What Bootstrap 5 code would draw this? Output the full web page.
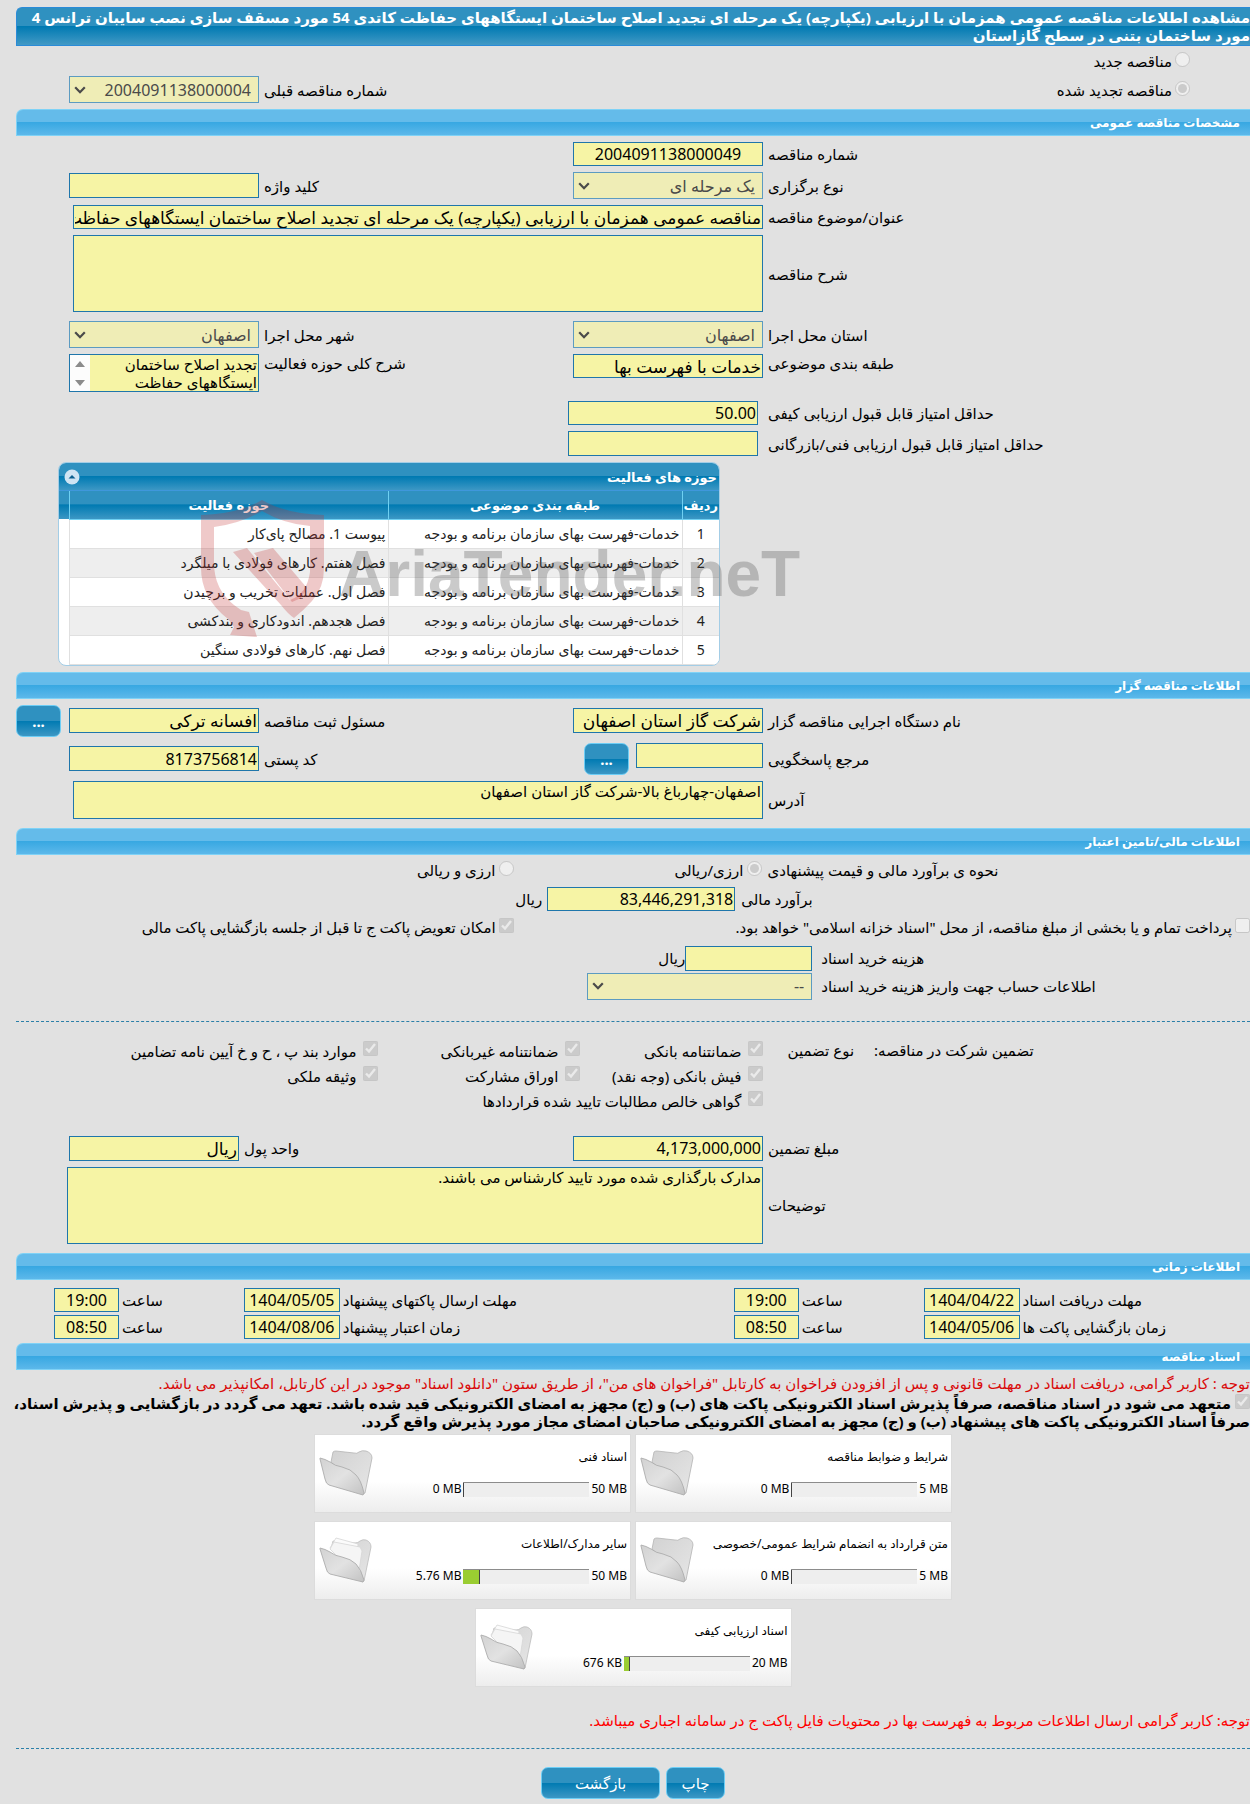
<!DOCTYPE html>
<html lang="fa" dir="rtl">
<head>
<meta charset="utf-8">
<meta name="viewport" content="width=device-width, initial-scale=1">
<title>مشاهده اطلاعات مناقصه عمومی</title>
<link rel="stylesheet" href="https://cdn.jsdelivr.net/npm/bootstrap@5.3.0/dist/css/bootstrap.min.css">
<style>
  body { background: #e1e1e1; color: #000; font: 15px/18px "Noto Sans", "DejaVu Sans", sans-serif; overflow-x: hidden; }
  .stack { display: flex; flex-direction: column; gap: 6px; }
  .indent { padding-left: 69px; }
  .indent-page { margin-left: 16px; }
  .extra { margin-top: 3px; }

  .title-bar { min-height: 39px; border: 1px solid #2a8bd8; border-right: 0; border-radius: 6px 0 0 0; font-size: 15px; line-height: 18px; color: #fff; font-weight: 700; margin: 7px 0 6px 16px;
    background: linear-gradient(#2f91c0 0 50%, #007ab2 50%, #4299c5); }
  .section-bar { height: 27px; border: 1px solid #7fd2f6; border-right: 0; border-radius: 7px 0 0 0; margin: 0 0 6px 16px; padding-right: 10px; font-size: 12px; line-height: 25px; color: #fff; font-weight: 700;
    background: linear-gradient(#64bbea 0 48%, #38a8e2 50%, #5cb8ea); }
  .after-table { margin-top: 6px; }
  .after-area { margin-top: 9px; }

  .pair { display: grid; grid-template-columns: minmax(0, 482fr) 190px minmax(0, 304fr) 190px; column-gap: 5px; align-items: center; }
  .pair > label { text-align: left; }
  .pair > .span-field { grid-column: 2 / 5; width: auto; margin-left: 4px; }
  .pair > .span-full { margin-left: -2px; }
  .pair > .shifted { margin-right: 5px; width: 190px; }

  .fld, .fld:focus { background-color: #f6f4a5; border: 1px solid #1f76ab; border-radius: 0; color: #000; font-size: 16px; line-height: 20px; padding: 0 1px; height: 24px; min-height: 0; resize: none; box-shadow: none; }
  .fld.high { height: 25px; }
  .fld.word { font-size: 17px; }
  .fld.area { font-size: 15px; line-height: 18px; min-height: 0; }
  .fld.area-tall { height: 77px; }
  .fld.area-low { height: 38px; }
  .pick, .pick:disabled { appearance: none; opacity: 1; background: #efedb6 url("data:image/svg+xml,%3Csvg xmlns='http://www.w3.org/2000/svg' viewBox='0 0 12 8'%3E%3Cpath d='M1.2 1.2 6 6.2l4.800-5' fill='none' stroke='%234a4a4a' stroke-width='2.200'/%3E%3C/svg%3E") no-repeat left 4px center / 12px 8px; border: 1px solid #5c9bc1; border-radius: 0; color: #4a4a4a; font-size: 16px; line-height: 20px; height: 27px; padding: 0 7px 0 20px; }
  input[type=radio], input[type=checkbox] { width: 15px; height: 15px; margin: 0; flex: none; }
  .choice { display: flex; align-items: flex-start; gap: 3px; }
  .kind { padding-right: 60px; }
  .kind-new { height: 24px; }
  .kind-old { margin-bottom: 6px; }

  .blue-btn { --bs-btn-color: #fff; --bs-btn-hover-color: #fff; border: 1px solid #6ccdf5; border-radius: 7px; height: 32px; padding: 0; line-height: 20px; font-size: 15px; width: 45px; flex: none;
    background: linear-gradient(#2f91c0 0 49%, #007ab2 50%, #3c97c4); }
  .blue-btn.print { width: 59px; }
  .blue-btn.back { width: 119px; }
  .more-btn { font-weight: 700; }
  .dashed { border: 0; border-top: 1px dashed #2a7fa8; opacity: 1; margin: 0 0 0 16px; }

  .scroll-box { display: flex; height: 38px; border: 1px solid #1f76ab; background: #f6f4a5; }
  .scroll-box .fld { flex: 1; min-width: 0; border: 0; height: 36px; overflow: hidden; }
  .scroll-track { width: 20px; background: #fcfcfc; }

  .outdent { gap: 8px; margin-left: -53px; }
  .outdent .fld { width: 190px; flex: none; }
  .ref-group { gap: 7px; }
  .ref-group .fld, .fee { width: 127px; flex: none; }

  .activity { width: 662px; margin-left: 58px; align-self: flex-end; position: relative; }
  .activity-frame { border: 1px solid #a3cde6; border-radius: 8px; overflow: hidden; background: #fff; }
  .activity-title { height: 28px; padding: 0 2px 0 5px; font-size: 13px; color: #fff; font-weight: 700; border-bottom: 1px solid #3f97dc; background: linear-gradient(#2f91c0 0 50%, #007ab2 50%, #3c97c4); }
  .activity-table { table-layout: fixed; width: 650px; font-size: 14px; line-height: 18px; }
  .activity-body { background: linear-gradient(#2f91c0 0 45%, #007ab2 50%, #3c97c4) no-repeat 0 0 / 100% 28px; }
  .activity-table th { height: 28px; padding: 0; color: #fff; text-align: center; border-left: 1px solid #6fd0f2; border-bottom: 1px solid #6fd0f2; font-size: 13px; }
  .activity-table td { height: 29px; padding: 0 2px; color: #222; background: #fff; border-left: 1px solid #e0e0e0; border-bottom: 1px solid #e0e0e0; }
  .activity-table tr:nth-child(even) td { background: #eee; }
  .watermark { position: absolute; left: 140px; top: 36px; width: 604px; height: 142px; pointer-events: none; }

  .cur-row { height: 20px; }
  .cur-label { width: 38.6%; text-align: left; margin-left: 6px; flex: none; }
  .cur-first { width: 248px; flex: none; }
  .est-label { width: 40.7%; text-align: left; flex: none; }
  .est .fld { width: 188px; margin: 0 6px 0 5px; flex: none; }
  .pay-row { height: 23px; padding-top: 1px; }
  .pay-first { width: 58.9%; flex: none; }
  .doc-rows { display: flex; flex-direction: column; gap: 2px; }
  .doc-label { width: 34.3%; text-align: left; margin-left: 9px; flex: none; }
  .account { width: 225px; flex: none; }
  .dashed-money { margin-top: 21px; margin-bottom: 19px; }

  .guarantee { display: grid; grid-template-columns: 39% 183px 202px 1fr; }
  .guarantee-label { justify-content: flex-end; gap: 20px; padding: 0 0 0 25px; }
  .opt { display: flex; gap: 6px; height: 25px; align-items: flex-start; white-space: nowrap; }
  .opt > label { padding-top: 1px; }
  .opt-start { grid-column: 2; }
  .opt-long { grid-column: 2 / 5; }
  .amount { margin-top: 20px; }
  .unit-group { grid-column: 3 / 5; display: flex; justify-content: flex-end; align-items: center; gap: 5px; }
  .unit-group .fld { width: 170px; }

  .times { display: grid; grid-template-columns: 228fr 96px 119fr 65px 389fr 96px 119fr 65px; gap: 3px; padding-left: 54px; margin: 8px 0 4px; align-items: center; }
  .times label { text-align: left; white-space: nowrap; }
  .times .fld { text-align: center; }

  .notice { color: #d90b0b; margin: 0; }
  .notice-end { color: #f00; margin: 24px 0 19px; }
  .pledge { font-weight: 700; line-height: 18px; margin: 2px 0 4px 10px; }
  .files { max-width: 640px; margin: 0 auto; display: flex; flex-wrap: wrap; justify-content: center; gap: 8px 4px; }
  .file-box { width: 317px; height: 79px; border: 1px solid #dcdcdc; background: linear-gradient(#fff 60%, #ededed); display: flex; justify-content: space-between; align-items: center; padding: 0 3px 0 4px; font-size: 12px; }
  .file-size { direction: ltr; display: flex; width: max-content; align-items: center; gap: 2px; margin-top: 14px; }
  .file-meter { width: 126px; height: 15px; border-radius: 0; background: #eee; border-top: 1px solid #8c8c8c; }
  .file-meter .progress-bar { background: #9acd32; border-right: 1px solid #444; box-sizing: content-box; }
  .actions { gap: 6px; margin: 18px 0 6px 16px; }
</style>
</head>
<body>
<svg width="0" height="0" class="position-absolute" aria-hidden="true">
  <defs>
    <linearGradient id="gBack" x1="0" y1="0" x2="1" y2="1"><stop offset="0" stop-color="#d2d2d2"/><stop offset="1" stop-color="#e6e6e6"/></linearGradient>
    <linearGradient id="gFront" x1="0" y1="0" x2="1" y2="1"><stop offset="0" stop-color="#d2d2d2"/><stop offset=".5" stop-color="#e2e2e2"/><stop offset="1" stop-color="#c2c2c2"/></linearGradient>
    <symbol id="folder" viewBox="0 0 54 46">
      <path d="M12 12 14 2q1-1 3-1l18 2q3 1 5-1 3-2 7-1 6 2 6 7l-7 35-2 1-8-10z" fill="url(#gBack)" stroke="#b4b4b4" stroke-width=".8"/>
      <path d="M1 8q5 1 10 4 5 4 12 5 9 2 14 8 5 5 8 18l-1 2-34-10q-3-1-4-6L1 9z" fill="url(#gFront)" stroke="#adadad" stroke-width=".9"/>
    </symbol>
    <symbol id="folderFull" viewBox="0 0 54 46">
      <path d="M12 12 14 4l22 2q3 0 5-2 3-2 6-1 5 2 5 7l-7 34-2 1-8-10z" fill="url(#gBack)" stroke="#bcbcbc" stroke-width=".8"/>
      <path d="m11 11 6-10 22 6-2 30z" fill="#fbfbfb" stroke="#d6d6d6" stroke-width=".8"/>
      <path d="m11 12 4-7 26 5 2 4-4 26z" fill="#f5f5f5" stroke="#d6d6d6" stroke-width=".8"/>
      <path d="M1 11q5 1 10 4 5 4 12 5 9 2 14 7 5 5 8 16l-1 2-33-8q-3-1-4-6L1 12z" fill="url(#gFront)" stroke="#adadad" stroke-width=".9"/>
    </symbol>
  </defs>
</svg>

<h1 class="title-bar">مشاهده اطلاعات مناقصه عمومی همزمان با ارزیابی (یکپارچه) یک مرحله ای تجدید اصلاح ساختمان ایستگاههای حفاظت کاتدی 54 مورد مسقف سازی نصب سایبان ترانس 4 مورد ساختمان بتنی در سطح گازاستان</h1>

<main>
  <div class="indent">
    <div class="choice kind kind-new">
      <input type="radio" id="rNew" name="kind" disabled><label for="rNew">مناقصه جدید</label>
    </div>
    <div class="pair kind-old">
      <div class="choice kind">
        <input type="radio" id="rOld" name="kind" checked disabled><label for="rOld">مناقصه تجدید شده</label>
      </div>
      <span></span>
      <label for="prevNo">شماره مناقصه قبلی</label>
      <select id="prevNo" class="form-select pick" disabled><option>2004091138000004</option></select>
    </div>
  </div>

  <h2 class="section-bar">مشخصات مناقصه عمومی</h2>
  <div class="stack">
    <div class="stack indent">
      <div class="pair"><label for="no">شماره مناقصه</label><input id="no" class="form-control fld text-center" value="2004091138000049" readonly></div>
      <div class="pair">
        <label for="how">نوع برگزاری</label><select id="how" class="form-select pick" disabled><option>یک مرحله ای</option></select>
        <label for="kw">کلید واژه</label><input id="kw" class="form-control fld high" readonly>
      </div>
      <div class="pair"><label for="subj">عنوان/موضوع مناقصه</label><input id="subj" class="form-control fld word span-field" value="مناقصه عمومی همزمان با ارزیابی (یکپارچه) یک مرحله ای تجدید اصلاح ساختمان ایستگاههای حفاظت کاتدی 54 مورد مسقف سازی نصب سایبان ترانس" readonly></div>
      <div class="pair"><label for="desc">شرح مناقصه</label><textarea id="desc" class="form-control fld area area-tall span-field" readonly></textarea></div>
      <div class="pair extra">
        <label for="prov">استان محل اجرا</label><select id="prov" class="form-select pick" disabled><option>اصفهان</option></select>
        <label for="city">شهر محل اجرا</label><select id="city" class="form-select pick" disabled><option>اصفهان</option></select>
      </div>
      <div class="pair align-items-start">
        <label for="cls">طبقه بندی موضوعی</label><input id="cls" class="form-control fld word" value="خدمات با فهرست بها" readonly>
        <label for="scope">شرح کلی حوزه فعالیت</label>
        <div class="scroll-box">
          <textarea id="scope" class="form-control fld area" readonly>تجدید اصلاح ساختمان ایستگاههای حفاظت</textarea>
          <svg class="scroll-track" viewBox="0 0 20 36" aria-hidden="true"><path d="M5 12h10l-5-6zM5 25h10l-5 6z" fill="#8b8b8b"/></svg>
        </div>
      </div>
      <div class="pair extra"><label for="q1">حداقل امتیاز قابل قبول ارزیابی کیفی</label><input id="q1" class="form-control fld shifted" value="50.00" readonly></div>
      <div class="pair"><label for="q2">حداقل امتیاز قابل قبول ارزیابی فنی/بازرگانی</label><input id="q2" class="form-control fld high shifted" readonly></div>
    </div>

    <section class="activity">
      <div class="activity-frame">
        <div class="activity-title d-flex justify-content-between align-items-center">
          <span>حوزه های فعالیت</span>
          <button type="button" class="btn p-0 border-0 d-flex" aria-label="بستن"><svg width="16" height="16" viewBox="0 0 16 16"><circle cx="8" cy="8" r="7.500" fill="#cfe4f3"/><path d="M4.500 9.500h7L8 6z" fill="#0c5f90"/></svg></button>
        </div>
        <div class="activity-body">
          <table class="activity-table">
            <colgroup><col style="width:37px"><col style="width:294px"><col></colgroup>
            <thead><tr><th>ردیف</th><th>طبقه بندی موضوعی</th><th>حوزه فعالیت</th></tr></thead>
            <tbody>
              <tr><td class="text-center">1</td><td>خدمات-فهرست بهای سازمان برنامه و بودجه</td><td>پیوست 1. مصالح پای‌کار</td></tr>
              <tr><td class="text-center">2</td><td>خدمات-فهرست بهای سازمان برنامه و بودجه</td><td>فصل هفتم. کارهای فولادی با میلگرد</td></tr>
              <tr><td class="text-center">3</td><td>خدمات-فهرست بهای سازمان برنامه و بودجه</td><td>فصل اول. عملیات تخریب و برچیدن</td></tr>
              <tr><td class="text-center">4</td><td>خدمات-فهرست بهای سازمان برنامه و بودجه</td><td>فصل هجدهم. اندودکاری و بندکشی</td></tr>
              <tr><td class="text-center">5</td><td>خدمات-فهرست بهای سازمان برنامه و بودجه</td><td>فصل نهم. کارهای فولادی سنگین</td></tr>
            </tbody>
          </table>
        </div>
      </div>
      <svg class="watermark" viewBox="0 0 604 142">
        <g fill="#c23030" fill-opacity=".26">
          <path d="M3 17Q40 16 64 2q24 14 62 15v53q0 20-12 33-9 10-18 17-6-4-13-13L35 54l14-4 43 52q17-6 20-28V28Q86 26 64 13 42 26 16 29v36q0 26 20 42l7 5 8 2 8 25-27-2 4-8-6-8Q3 100 3 70z"/>
          <path d="M56 55l19-5 34 40-6 10-9 4z"/>
        </g>
        <text x="141" y="98" direction="ltr" font-family="Liberation Sans, sans-serif" font-weight="700" font-size="64" fill="#505050" fill-opacity=".3">AriaTender.neT</text>
      </svg>
    </section>
  </div>

  <h2 class="section-bar after-table">اطلاعات مناقصه گزار</h2>
  <div class="stack indent">
    <div class="pair">
      <label for="org">نام دستگاه اجرایی مناقصه گزار</label><input id="org" class="form-control fld high word" value="شرکت گاز استان اصفهان" readonly>
      <label for="resp">مسئول ثبت مناقصه</label>
      <div class="d-flex align-items-center outdent"><input id="resp" class="form-control fld high word" value="افسانه ترکی" readonly><button type="button" class="btn blue-btn more-btn">...</button></div>
    </div>
    <div class="pair">
      <label for="ref">مرجع پاسخگویی</label>
      <div class="d-flex align-items-start ref-group"><input id="ref" class="form-control fld high" readonly><button type="button" class="btn blue-btn more-btn">...</button></div>
      <label for="zip">کد پستی</label><input id="zip" class="form-control fld high" value="8173756814" readonly>
    </div>
    <div class="pair"><label for="addr">آدرس</label><textarea id="addr" class="form-control fld area area-low span-field" readonly>اصفهان-چهارباغ بالا-شرکت گاز استان اصفهان</textarea></div>
  </div>

  <h2 class="section-bar after-area">اطلاعات مالی/تامین اعتبار</h2>
  <div class="stack">
    <div class="d-flex cur-row">
      <span class="cur-label">نحوه ی برآورد مالی و قیمت پیشنهادی</span>
      <div class="choice cur-first"><input type="radio" id="fr1" name="cur" checked disabled><label for="fr1">ارزی/ریالی</label></div>
      <div class="choice"><input type="radio" id="fr2" name="cur" disabled><label for="fr2">ارزی و ریالی</label></div>
    </div>
    <div class="d-flex align-items-center est"><label class="est-label" for="est">برآورد مالی</label><input id="est" class="form-control fld" value="83,446,291,318" readonly><span>ریال</span></div>
    <div class="d-flex pay-row">
      <div class="choice pay-first"><input type="checkbox" id="tb" disabled><label for="tb">پرداخت تمام و یا بخشی از مبلغ مناقصه، از محل "اسناد خزانه اسلامی" خواهد بود.</label></div>
      <div class="choice"><input type="checkbox" id="sw" checked disabled><label for="sw">امکان تعویض پاکت ج تا قبل از جلسه بازگشایی پاکت مالی</label></div>
    </div>
    <div class="doc-rows">
      <div class="d-flex align-items-center"><label class="doc-label" for="fee">هزینه خرید اسناد</label><input id="fee" class="form-control fld high fee" readonly><span>ریال</span></div>
      <div class="d-flex align-items-center"><label class="doc-label" for="acc">اطلاعات حساب جهت واریز هزینه خرید اسناد</label><select id="acc" class="form-select pick account" disabled><option>--</option></select></div>
    </div>
  </div>

  <hr class="dashed dashed-money">

  <div class="guarantee">
    <div class="guarantee-label d-flex"><span>تضمین شرکت در مناقصه:</span><span>نوع تضمین</span></div>
    <div class="opt"><input type="checkbox" id="g1" checked disabled><label for="g1">ضمانتنامه بانکی</label></div>
    <div class="opt"><input type="checkbox" id="g2" checked disabled><label for="g2">ضمانتنامه غیربانکی</label></div>
    <div class="opt"><input type="checkbox" id="g3" checked disabled><label for="g3">موارد بند پ ، ح و خ آیین نامه تضامین</label></div>
    <div class="opt opt-start"><input type="checkbox" id="g4" checked disabled><label for="g4">فیش بانکی (وجه نقد)</label></div>
    <div class="opt"><input type="checkbox" id="g5" checked disabled><label for="g5">اوراق مشارکت</label></div>
    <div class="opt"><input type="checkbox" id="g6" checked disabled><label for="g6">وثیقه ملکی</label></div>
    <div class="opt opt-long"><input type="checkbox" id="g7" checked disabled><label for="g7">گواهی خالص مطالبات تایید شده قراردادها</label></div>
  </div>

  <div class="stack indent amount">
    <div class="pair">
      <label for="amt">مبلغ تضمین</label><input id="amt" class="form-control fld high" value="4,173,000,000" readonly>
      <div class="unit-group"><label for="unit">واحد پول</label><input id="unit" class="form-control fld high word" value="ریال" readonly></div>
    </div>
    <div class="pair"><label for="note">توضیحات</label><textarea id="note" class="form-control fld area area-tall span-field span-full" readonly>مدارک بارگذاری شده مورد تایید کارشناس می باشند.</textarea></div>
  </div>

  <h2 class="section-bar after-area">اطلاعات زمانی</h2>
  <div class="times">
    <label for="t1">مهلت دریافت اسناد</label><input id="t1" class="form-control fld" value="1404/04/22" readonly>
    <label for="t2">ساعت</label><input id="t2" class="form-control fld" value="19:00" readonly>
    <label for="t3">مهلت ارسال پاکتهای پیشنهاد</label><input id="t3" class="form-control fld" value="1404/05/05" readonly>
    <label for="t4">ساعت</label><input id="t4" class="form-control fld" value="19:00" readonly>
    <label for="t5">زمان بازگشایی پاکت ها</label><input id="t5" class="form-control fld" value="1404/05/06" readonly>
    <label for="t6">ساعت</label><input id="t6" class="form-control fld" value="08:50" readonly>
    <label for="t7">زمان اعتبار پیشنهاد</label><input id="t7" class="form-control fld" value="1404/08/06" readonly>
    <label for="t8">ساعت</label><input id="t8" class="form-control fld" value="08:50" readonly>
  </div>

  <h2 class="section-bar mb-1">اسناد مناقصه</h2>
  <p class="notice">توجه : کاربر گرامی، دریافت اسناد در مهلت قانونی و پس از افزودن فراخوان به کارتابل "فراخوان های من"، از طریق ستون "دانلود اسناد" موجود در این کارتابل، امکانپذیر می باشد.</p>
  <p class="pledge"><input type="checkbox" id="pl" checked disabled> <label for="pl" class="d-inline">متعهد می شود در اسناد مناقصه، صرفاً پذیرش اسناد الکترونیکی پاکت های (ب) و (ج) مجهز به امضای الکترونیکی قید شده باشد. تعهد می گردد در بازگشایی و پذیرش اسناد، صرفاً اسناد الکترونیکی پاکت های پیشنهاد (ب) و (ج) مجهز به امضای الکترونیکی صاحبان امضای مجاز مورد پذیرش واقع گردد.</label></p>

  <div class="indent-page"><div class="files">
    <div class="file-box"><div><div>شرایط و ضوابط مناقصه</div><div class="file-size"><span>0 MB</span><div class="progress file-meter"><div class="progress-bar" style="width:0%"></div></div><span>5 MB</span></div></div><svg width="54" height="46"><use href="#folder"/></svg></div>
    <div class="file-box"><div><div>اسناد فنی</div><div class="file-size"><span>0 MB</span><div class="progress file-meter"><div class="progress-bar" style="width:0%"></div></div><span>50 MB</span></div></div><svg width="54" height="46"><use href="#folder"/></svg></div>
    <div class="file-box"><div><div>متن قرارداد به انضمام شرایط عمومی/خصوصی</div><div class="file-size"><span>0 MB</span><div class="progress file-meter"><div class="progress-bar" style="width:0%"></div></div><span>5 MB</span></div></div><svg width="54" height="46"><use href="#folder"/></svg></div>
    <div class="file-box"><div><div>سایر مدارک/اطلاعات</div><div class="file-size"><span>5.76 MB</span><div class="progress file-meter"><div class="progress-bar" style="width:12%"></div></div><span>50 MB</span></div></div><svg width="54" height="46"><use href="#folderFull"/></svg></div>
    <div class="file-box"><div><div>اسناد ارزیابی کیفی</div><div class="file-size"><span>676 KB</span><div class="progress file-meter"><div class="progress-bar" style="width:4%"></div></div><span>20 MB</span></div></div><svg width="54" height="46"><use href="#folderFull"/></svg></div>
  </div></div>

  <p class="notice notice-end">توجه: کاربر گرامی ارسال اطلاعات مربوط به فهرست بها در محتویات فایل پاکت ج در سامانه اجباری میباشد.</p>
  <hr class="dashed">
  <div class="d-flex justify-content-center actions">
    <button type="button" class="btn blue-btn print">چاپ</button>
    <button type="button" class="btn blue-btn back">بازگشت</button>
  </div>
</main>
<script src="https://cdn.jsdelivr.net/npm/bootstrap@5.3.0/dist/js/bootstrap.bundle.min.js"></script>
</body>
</html>
